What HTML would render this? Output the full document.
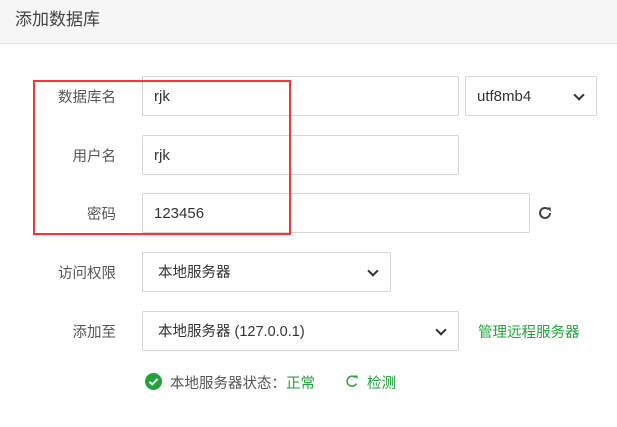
<!DOCTYPE html>
<html><head><meta charset="utf-8"><style>
*{box-sizing:border-box;margin:0;padding:0}
body{width:617px;height:427px;background:#fff;font-family:"Liberation Sans","Noto Sans CJK SC",sans-serif;color:#333;position:relative;overflow:hidden;font-size:14px}
.hd{position:absolute;left:0;top:0;width:617px;height:44px;background:#f6f6f6;border-bottom:1px solid #e6e6e6;font-size:17px;color:#444;padding-left:15px;line-height:40px}
.lb{position:absolute;width:100px;left:16px;text-align:right;color:#555;font-size:14.5px}
.in{position:absolute;left:142px;border:1px solid #d5d5d5;border-radius:2px;height:40px;line-height:40px;padding-left:11px;font-size:15px;color:#333}
.sel::after{content:"";position:absolute;right:13px;top:14px;width:6px;height:6px;border-right:2px solid #333;border-bottom:2px solid #333;transform:rotate(45deg)}
.red{position:absolute;left:33px;top:80px;width:258px;height:155px;border:2px solid #f33}
.g{color:#20a53a}
</style></head><body>
<div class="hd">添加数据库</div>
<div class="lb" style="top:86px">数据库名</div>
<div class="in" style="top:76px;width:317px">rjk</div>
<div class="in sel" style="left:465px;top:76px;width:132px">utf8mb4</div>
<div class="lb" style="top:145px">用户名</div>
<div class="in" style="top:135px;width:317px">rjk</div>
<div class="lb" style="top:203px">密码</div>
<div class="in" style="top:193px;width:388px">123456</div>
<svg style="position:absolute;left:537px;top:205px" width="16" height="16" viewBox="0 0 16 16"><path d="M13 8a5 5 0 1 1-1.6-3.7" fill="none" stroke="#444" stroke-width="2"/><path d="M9.5 2.5h4.2v4.2z" fill="#444"/></svg>
<div class="red"></div>
<div class="lb" style="top:262px">访问权限</div>
<div class="in sel" style="top:252px;width:249px;padding-left:15px;font-size:14.5px">本地服务器</div>
<div class="lb" style="top:321px">添加至</div>
<div class="in sel" style="top:311px;width:317px;padding-left:15px;font-size:14.5px">本地服务器 (127.0.0.1)</div>
<div class="g" style="position:absolute;left:478px;top:321px;font-size:14.5px">管理远程服务器</div>
<svg style="position:absolute;left:145px;top:373px" width="17" height="17" viewBox="0 0 17 17"><circle cx="8.5" cy="8.5" r="8.5" fill="#20a53a"/><path d="M4.5 8.8l2.7 2.7 5.3-5.5" fill="none" stroke="#fff" stroke-width="2"/></svg>
<div style="position:absolute;left:170px;top:372px;color:#555;font-size:14.5px">本地服务器状态：<span class="g">正常</span></div>
<svg style="position:absolute;left:344px;top:373px" width="16" height="16" viewBox="0 0 16 16"><path d="M12.5 10.5A5 5 0 1 1 11.5 4.5" fill="none" stroke="#20a53a" stroke-width="1.5"/><path d="M10 2.5h3.5V6z" fill="#20a53a"/></svg>
<div class="g" style="position:absolute;left:367px;top:372px;font-size:14.5px">检测</div>
</body></html>
